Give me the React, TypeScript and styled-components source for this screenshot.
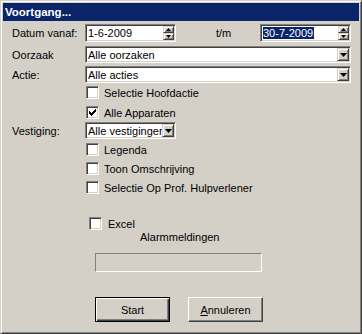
import React from "react";
import styled, { createGlobalStyle, css } from "styled-components";

const GlobalStyle = createGlobalStyle`
  html, body {
    margin: 0;
    padding: 0;
    background: #d4d0c8;
  }
  body {
    font-family: "Liberation Sans", Arial, sans-serif;
    font-size: 11px;
    color: #000;
  }
`;

const sunken = css`
  box-sizing: border-box;
  border: 1px solid;
  border-color: #808080 #fff #fff #808080;
  box-shadow: inset 1px 1px #404040, inset -1px -1px #d4d0c8;
`;

const raised = css`
  box-sizing: border-box;
  background: #d4d0c8;
  border: 1px solid;
  border-color: #d4d0c8 #404040 #404040 #d4d0c8;
  box-shadow: inset 1px 1px #fff, inset -1px -1px #808080;
`;

const Window = styled.div`
  width: 362px;
  height: 334px;
  box-sizing: border-box;
  background: #d4d0c8;
  border: 1px solid;
  border-color: #d4d0c8 #404040 #404040 #d4d0c8;
  box-shadow: inset 1px 1px #fff, inset -1px -1px #808080;
  padding: 2px;
  display: flex;
  flex-direction: column;
`;

const TitleBar = styled.div`
  height: 18px;
  background: #0a246a;
  color: #fff;
  font-weight: bold;
  font-size: 11.5px;
  display: flex;
  align-items: center;
  padding-left: 2px;
`;

const Body = styled.div`
  display: flex;
  flex-direction: column;
  padding-left: 9px;
`;

const Row = styled.div<{ $top: number; $indent?: number }>`
  display: flex;
  align-items: center;
  margin-top: ${(p) => p.$top}px;
  padding-left: ${(p) => p.$indent ?? 0}px;
`;

const Label = styled.span`
  width: 73px;
  flex-shrink: 0;
`;

const ToLabel = styled.span`
  margin-left: 40px;
  width: 44px;
`;

const Field = styled.div<{ $width: number; $height: number }>`
  ${sunken};
  width: ${(p) => p.$width}px;
  height: ${(p) => p.$height}px;
  background: #fff;
  display: flex;
  align-items: center;
  padding: 1px 1px 1px 2px;
  overflow: hidden;
  white-space: nowrap;
`;

const FieldText = styled.span`
  flex: 1;
  overflow: hidden;
`;

const Selected = styled.span`
  background: #0a246a;
  color: #fff;
  padding: 0 1px;
  margin-left: -1px;
`;

const Spinner = styled.div`
  display: flex;
  flex-direction: column;
  width: 11px;
  height: 14px;
  flex-shrink: 0;
`;

const SpinButton = styled.div`
  ${raised};
  height: 7px;
  display: flex;
  align-items: center;
  justify-content: center;
`;

const DropButton = styled.div`
  ${raised};
  width: 12px;
  height: 13px;
  flex-shrink: 0;
  display: flex;
  align-items: center;
  justify-content: center;
`;

const Box = styled.div`
  ${sunken};
  width: 13px;
  height: 13px;
  background: #fff;
  flex-shrink: 0;
  display: flex;
  align-items: center;
  justify-content: center;
`;

const CheckText = styled.span<{ $gap?: number }>`
  margin-left: ${(p) => p.$gap ?? 5}px;
`;

const Progress = styled.div`
  box-sizing: border-box;
  width: 167px;
  height: 19px;
  border: 1px solid;
  border-color: #808080 #fff #fff #808080;
`;

const Button = styled.button<{ $default?: boolean }>`
  box-sizing: border-box;
  width: 75px;
  height: 25px;
  padding: 0;
  background: #d4d0c8;
  font-family: "Liberation Sans", Arial, sans-serif;
  font-size: 11px;
  color: #000;
  border: 1px solid;
  ${(p) =>
    p.$default
      ? css`
          border-color: #000;
          box-shadow: inset 1px 1px #fff, inset -1px -1px #404040,
            inset -2px -2px #808080;
        `
      : css`
          border-color: #fff #404040 #404040 #fff;
          box-shadow: inset -1px -1px #808080;
        `}
  & + & {
    margin-left: 18px;
  }
`;

const Arrow = ({ dir, w }: { dir: "up" | "down"; w: number }) => {
  const h = Math.ceil(w / 2);
  const pts =
    dir === "up" ? `0,${h} ${w},${h} ${w / 2},0` : `0,0 ${w},0 ${w / 2},${h}`;
  return (
    <svg width={w} height={h} viewBox={`0 0 ${w} ${h}`}>
      <polygon points={pts} fill="#000" />
    </svg>
  );
};

const Check = () => (
  <svg width="7" height="7" viewBox="0 0 7 7" shapeRendering="crispEdges">
    <path
      d="M6 0h1v1H6zM5 1h2v1H5zM0 2h1v1H0zM4 2h3v1H4zM0 3h2v1H0zM3 3h3v1H3zM0 4h5v1H0zM1 5h3v1H1zM2 6h1v1H2z"
      fill="#000"
    />
  </svg>
);

function DateField({ value, left, selected }: { value: string; left?: number; selected?: boolean }) {
  return (
    <Field $width={91} $height={18} style={left ? { marginLeft: left } : undefined}>
      <FieldText>{selected ? <Selected>{value}</Selected> : value}</FieldText>
      <Spinner>
        <SpinButton>
          <Arrow dir="up" w={5} />
        </SpinButton>
        <SpinButton>
          <Arrow dir="down" w={5} />
        </SpinButton>
      </Spinner>
    </Field>
  );
}

function Combo({ value, width }: { value: string; width: number }) {
  return (
    <Field $width={width} $height={17}>
      <FieldText>{value}</FieldText>
      <DropButton>
        <Arrow dir="down" w={7} />
      </DropButton>
    </Field>
  );
}

function CheckRow({
  label,
  checked,
  top,
  indent = 74,
  gap,
}: {
  label: string;
  checked?: boolean;
  top: number;
  indent?: number;
  gap?: number;
}) {
  return (
    <Row $top={top} $indent={indent}>
      <Box>{checked && <Check />}</Box>
      <CheckText $gap={gap}>{label}</CheckText>
    </Row>
  );
}

export default function App() {
  return (
    <>
      <GlobalStyle />
      <Window>
        <TitleBar>Voortgang...</TitleBar>
        <Body>
          <Row $top={3}>
            <Label>Datum vanaf:</Label>
            <DateField value="1-6-2009" />
            <ToLabel>t/m</ToLabel>
            <DateField value="30-7-2009" selected />
          </Row>
          <Row $top={4}>
            <Label>Oorzaak</Label>
            <Combo value="Alle oorzaken" width={266} />
          </Row>
          <Row $top={3}>
            <Label>Actie:</Label>
            <Combo value="Alle acties" width={266} />
          </Row>
          <CheckRow top={3} label="Selectie Hoofdactie" />
          <CheckRow top={7} label="Alle Apparaten" checked />
          <Row $top={3}>
            <Label>Vestiging:</Label>
            <Combo value="Alle vestigingen" width={91} />
          </Row>
          <CheckRow top={4} label="Legenda" />
          <CheckRow top={6} label="Toon Omschrijving" />
          <CheckRow top={6} label="Selectie Op Prof. Hulpverlener" />
          <CheckRow top={23} indent={77} gap={6} label="Excel" />
          <Row $top={1} $indent={128}>
            Alarmmeldingen
          </Row>
          <Row $top={10} $indent={83}>
            <Progress />
          </Row>
          <Row $top={25} $indent={83}>
            <Button $default>Start</Button>
            <Button>
              <u>A</u>nnuleren
            </Button>
          </Row>
        </Body>
      </Window>
    </>
  );
}
